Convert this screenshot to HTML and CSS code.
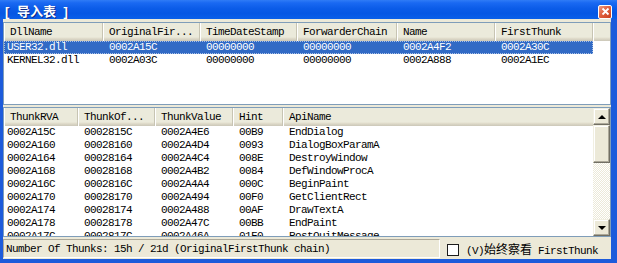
FILE: index.html
```html
<!DOCTYPE html>
<html lang="zh-CN">
<head>
    <meta charset="UTF-8">
    <title>导入表</title>
    <link rel="stylesheet" href="styles.css">
</head>
<body>
<div class="window">
    <div class="titlebar">
        <span class="title">[ 导入表 ]</span>
        <span class="close">
            <svg width="11" height="11" viewBox="0 0 11 11"><path d="M2.5 2.5 L8.5 8.5 M8.5 2.5 L2.5 8.5" stroke="#fff" stroke-width="1.8" fill="none"/></svg>
        </span>
    </div>
    <div class="client">
        <!-- DLL 列表 -->
        <div class="list top">
            <div class="head">
                <span>DllName</span>
                <span>OriginalFir...</span>
                <span>TimeDateStamp</span>
                <span>ForwarderChain</span>
                <span>Name</span>
                <span>FirstThunk</span>
                <span></span>
            </div>
            <div class="row sel">
                <span>USER32.dll</span>
                <span>0002A15C</span>
                <span>00000000</span>
                <span>00000000</span>
                <span>0002A4F2</span>
                <span>0002A30C</span>
            </div>
            <div class="row">
                <span>KERNEL32.dll</span>
                <span>0002A03C</span>
                <span>00000000</span>
                <span>00000000</span>
                <span>0002A888</span>
                <span>0002A1EC</span>
            </div>
        </div>

        <!-- Thunk 列表 -->
        <div class="list bottom">
            <div class="area">
                <div class="head">
                    <span>ThunkRVA</span>
                    <span>ThunkOf...</span>
                    <span>ThunkValue</span>
                    <span>Hint</span>
                    <span>ApiName</span>
                </div>
                <div class="row"><span>0002A15C</span><span>0002815C</span><span>0002A4E6</span><span>00B9</span><span>EndDialog</span></div>
                <div class="row"><span>0002A160</span><span>00028160</span><span>0002A4D4</span><span>0093</span><span>DialogBoxParamA</span></div>
                <div class="row"><span>0002A164</span><span>00028164</span><span>0002A4C4</span><span>008E</span><span>DestroyWindow</span></div>
                <div class="row"><span>0002A168</span><span>00028168</span><span>0002A4B2</span><span>0084</span><span>DefWindowProcA</span></div>
                <div class="row"><span>0002A16C</span><span>0002816C</span><span>0002A4A4</span><span>000C</span><span>BeginPaint</span></div>
                <div class="row"><span>0002A170</span><span>00028170</span><span>0002A494</span><span>00F0</span><span>GetClientRect</span></div>
                <div class="row"><span>0002A174</span><span>00028174</span><span>0002A488</span><span>00AF</span><span>DrawTextA</span></div>
                <div class="row"><span>0002A178</span><span>00028178</span><span>0002A47C</span><span>00BB</span><span>EndPaint</span></div>
                <div class="row"><span>0002A17C</span><span>0002817C</span><span>0002A46A</span><span>01F0</span><span>PostQuitMessage</span></div>
            </div>
            <div class="vscroll">
                <div class="btn"><i class="up"></i></div>
                <div class="thumb"></div>
                <div class="track"></div>
                <div class="btn"><i class="down"></i></div>
            </div>
        </div>

        <div class="status">
            <div class="field">Number Of Thunks: 15h / 21d (OriginalFirstThunk chain)</div>
            <label class="check"><span class="box"></span><span>(V)<span class="cjk">始终察看</span> FirstThunk</span></label>
        </div>
    </div>
</div>
</body>
</html>
```

FILE: styles.css
```css
*{margin:0; padding:0; box-sizing:border-box;}
body{
    width:617px;
    height:263px;
    overflow:hidden;
    font:11px "Liberation Mono","Noto Sans CJK SC",monospace;
    letter-spacing:-0.6px;
    color:#000;
}
.window{
    width:617px;
    height:263px;
    display:flex;
    flex-direction:column;
    background:#1d5bdb;
}
.titlebar{
    height:19px;
    flex:none;
    display:flex;
    align-items:center;
    justify-content:space-between;
    padding:2px 5px 0 5px;
    background:linear-gradient(#2f7cf6 0%, #1a69f2 15%, #0b5ce8 45%, #0657e4 70%, #0a5fe9 100%);
}
.title{
    color:#fff;
    font:bold 13px "Liberation Sans","Noto Sans CJK SC",sans-serif;
    letter-spacing:0;
    word-spacing:4px;
    text-shadow:1px 1px #0a2a8a;
}
.close{
    width:14px;
    height:14px;
    margin-top:2px;
    border:1px solid #fff;
    border-radius:2px;
    background:linear-gradient(135deg,#ef9c82 0%,#e0603f 45%,#c9401f 100%);
    display:flex;
    align-items:center;
    justify-content:center;
}
.close svg{display:block;}
.client{
    flex:1;
    margin:0 6px 4px 3px;
    padding-top:3px;
    background:#ece9d8;
    display:flex;
    flex-direction:column;
}
.list{
    background:#fff;
    border:1px solid #7f9db9;
    overflow:hidden;
}
.top{height:83px; flex:none;}
.bottom{
    height:130px;
    flex:none;
    margin-top:2px;
    display:flex;
}
.area{flex:1; overflow:hidden;}

.head{
    display:grid;
    height:18px;
    background:linear-gradient(#ebeadb 0%, #ebeadb 78%, #e2decd 84%, #d6d2c2 92%, #cbc7b8 100%);
}
.head span{
    padding-left:6px;
    line-height:19px;
    white-space:nowrap;
    overflow:hidden;
    border-right:1px solid #c7c4b3;
    box-shadow:inset 1px 0 #fff;
}
.head span:last-child{border-right:none;}
.row{
    display:grid;
    height:13px;
    line-height:13px;
}
.row span{
    padding-left:6px;
    white-space:nowrap;
    overflow:hidden;
}
.row span:first-child{padding-left:3px;}

.top .head{grid-template-columns:99px 97px 97px 100px 98px 98px 1fr;}
.top .row{grid-template-columns:99px 97px 97px 100px 98px 98px; width:589px;}
.bottom .head,
.bottom .row{grid-template-columns:74px 77px 78px 50px 1fr;}

.sel{
    background:#316ac5;
    color:#fff;
    outline:1px dotted #a9c0e6;
    outline-offset:-1px;
}

/* 滚动条 */
.vscroll{
    width:17px;
    flex:none;
    display:flex;
    flex-direction:column;
}
.btn,.thumb{
    background:#ece9d8;
    border:1px solid;
    border-color:#f1efe2 #716f64 #716f64 #f1efe2;
    box-shadow:inset -1px -1px #aca899, inset 1px 1px #fff;
}
.btn{
    height:17px;
    flex:none;
    display:flex;
    align-items:center;
    justify-content:center;
}
.thumb{height:38px; flex:none;}
.track{
    flex:1;
    background:repeating-conic-gradient(#ece9d8 0 25%, #fff 0 50%) 0 0/2px 2px;
}
.up,.down{
    width:0;
    height:0;
    border-left:4px solid transparent;
    border-right:4px solid transparent;
}
.up{border-bottom:4px solid #000;}
.down{border-top:4px solid #000;}

/* 状态栏 */
.status{
    flex:1;
    display:flex;
    align-items:center;
    padding-top:1px;
}
.field{
    width:437px;
    height:19px;
    line-height:18px;
    padding-left:2px;
    border:1px solid;
    border-color:#aca899 #fff #fff #aca899;
    white-space:nowrap;
    overflow:hidden;
}
.check{
    margin-left:7px;
    display:flex;
    align-items:center;
    gap:7px;
    white-space:nowrap;
}
.box{
    width:12px;
    height:12px;
    background:#fff;
    border:1px solid #1c1c1c;
    margin-top:2px;
}
.cjk{
    font-size:12px;
    letter-spacing:0;
}
```
